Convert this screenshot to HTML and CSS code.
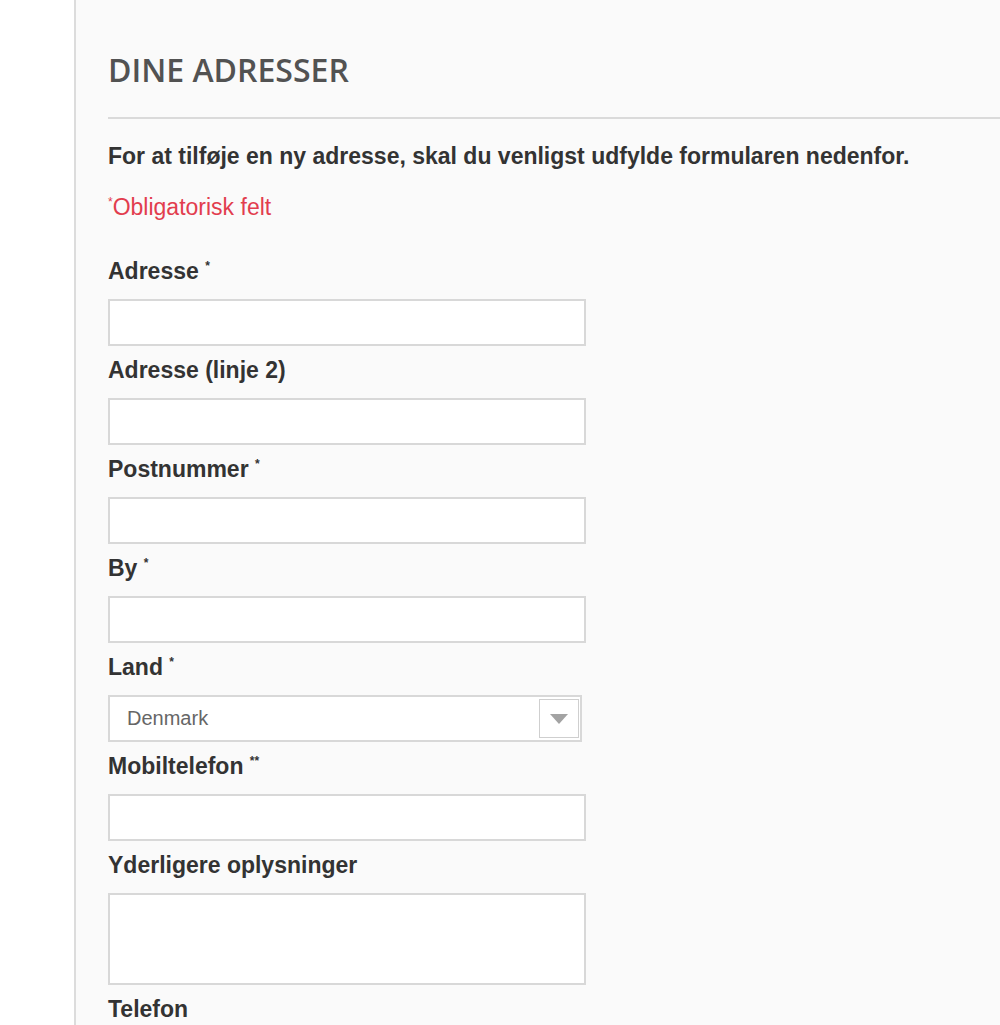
FILE: index.html
```html
<!DOCTYPE html>
<html>
	<head>
		<meta charset="UTF-8">
		<meta name="viewport" content="width=device-width, initial-scale=1.0">
		<title>Dine adresser</title>
		<link rel="stylesheet" href="styles.css">
	</head>
	<body>
		<div class="side"></div>

		<div class="indhold">
			<h1 class="overskrift">DINE ADRESSER</h1>
			<hr class="streg">

			<p class="intro">For at tilføje en ny adresse, skal du venligst udfylde formularen nedenfor.</p>
			<p class="krav"><sup>*</sup>Obligatorisk felt</p>

			<form class="adresse-form">
				<div class="felt">
					<label>Adresse <sup>*</sup></label>
					<input type="text">
				</div>
				<div class="felt">
					<label>Adresse (linje 2)</label>
					<input type="text">
				</div>
				<div class="felt">
					<label>Postnummer <sup>*</sup></label>
					<input type="text">
				</div>
				<div class="felt">
					<label>By <sup>*</sup></label>
					<input type="text">
				</div>
				<div class="felt">
					<label>Land <sup>*</sup></label>
					<div class="vaelg">
						<span>Denmark</span>
						<span class="pil"><i></i></span>
					</div>
				</div>
				<div class="felt">
					<label>Mobiltelefon <sup>**</sup></label>
					<input type="text">
				</div>
				<div class="felt">
					<label>Yderligere oplysninger</label>
					<textarea></textarea>
				</div>
				<div class="felt">
					<label>Telefon</label>
					<input type="text">
				</div>
			</form>
		</div>
	</body>
</html>
```

FILE: styles.css
```css
body {
	margin: 0;
	padding: 0;
	display: flex;
	min-height: 100vh;
	background-color: #fff;
	font-family: "Liberation Sans", Arial, sans-serif;
	color: #333;
	overflow: hidden;
}

.side {
	width: 74px;
	flex-shrink: 0;
}

.indhold {
	flex: 1;
	background-color: #fafafa;
	border-left: 2px solid #dcdcdc;
	padding: 48px 0 0 32px;
}

.overskrift {
	font-family: "Open Sans", "Liberation Sans", sans-serif;
	font-weight: 600;
	font-size: 32px;
	line-height: 44px;
	color: #525252;
	margin: 0;
}

.streg {
	border: none;
	height: 2px;
	background-color: #dadada;
	margin: 25px 0 0 0;
}

.intro {
	font-size: 23px;
	line-height: 26px;
	font-weight: bold;
	margin: 24px 0 0 0;
}

.krav {
	font-size: 23px;
	line-height: 26px;
	color: #e23d4e;
	margin: 25px 0 0 0;
}

sup {
	font-size: 12px;
	line-height: 0;
	vertical-align: 9px;
}

.adresse-form {
	margin-top: 38px;
}

.felt {
	margin-bottom: 11px;
}

.felt label {
	display: block;
	font-size: 23px;
	line-height: 26px;
	font-weight: bold;
	margin-bottom: 15px;
}

.felt input,
.felt textarea {
	display: block;
	box-sizing: border-box;
	width: 478px;
	height: 47px;
	border: 2px solid #d8d8d8;
	background-color: #fff;
	margin: 0;
	padding: 0 16px;
	font-family: inherit;
	font-size: 20px;
}

.felt textarea {
	height: 92px;
	resize: none;
}

.vaelg {
	box-sizing: border-box;
	width: 474px;
	height: 47px;
	border: 2px solid #d8d8d8;
	background-color: #fff;
	display: flex;
	align-items: center;
	justify-content: space-between;
	padding: 0 1px 0 17px;
	font-size: 20px;
	color: #666;
}

.pil {
	box-sizing: border-box;
	width: 40px;
	height: 39px;
	border: 1px solid #cfcfcf;
	display: flex;
	align-items: center;
	justify-content: center;
}

.pil i {
	width: 0;
	height: 0;
	border-left: 9px solid transparent;
	border-right: 9px solid transparent;
	border-top: 10px solid #a3a3a3;
}
```
